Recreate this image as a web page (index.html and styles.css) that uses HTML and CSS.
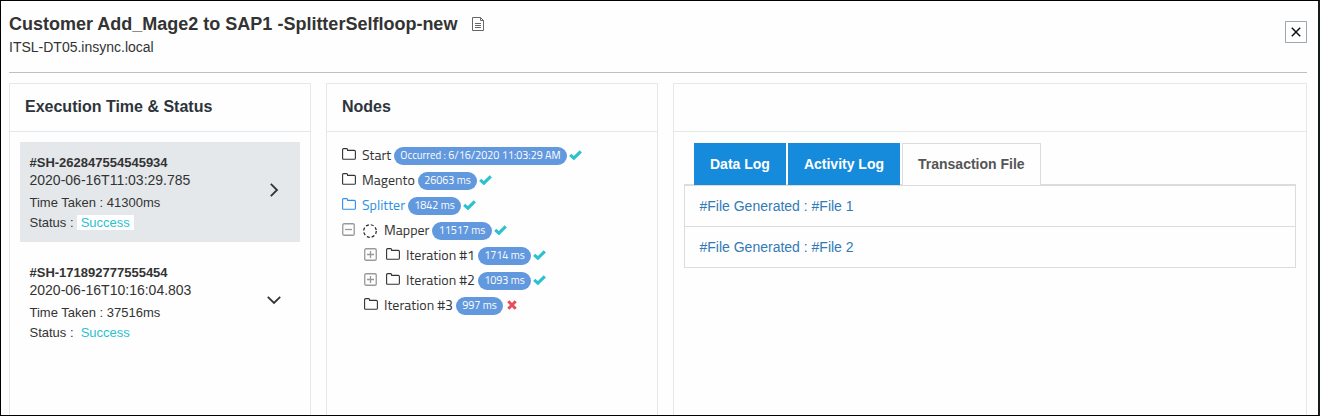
FILE: index.html
```html
<!DOCTYPE html>
<html lang="en">
<head>
<meta charset="utf-8">
<title>Execution details</title>
<link rel="stylesheet" href="styles.css">
</head>
<body>
<svg width="0" height="0" class="defs">
  <symbol id="folder" viewBox="0 0 14 12"><path d="M.6 10.2V1.7Q.6.6 1.7.6H4.6Q5.6.6 5.6 1.7V2.4H12.3Q13.4 2.4 13.4 3.5V10.2Q13.4 11.3 12.3 11.3H1.7Q.6 11.3.6 10.2Z" fill="none" stroke="currentColor" stroke-width="1.1"/></symbol>
  <symbol id="check" viewBox="0 0 13 10"><path d="M1.2 4.8L4.9 8.2 11.8 1.4" fill="none" stroke="#2bc1cf" stroke-width="3.1"/></symbol>
  <symbol id="cross" viewBox="0 0 10 10"><path d="M1.3 1.3L8.7 8.7M8.7 1.3L1.3 8.7" fill="none" stroke="#e94b5b" stroke-width="3"/></symbol>
  <symbol id="plus" viewBox="0 0 13 13"><rect x=".75" y=".75" width="11.5" height="11.5" rx="1.3" fill="none" stroke="#999" stroke-width="1.3"/><path d="M3 6.5H10M6.5 3V10" stroke="#999" stroke-width="1.3"/></symbol>
  <symbol id="minus" viewBox="0 0 13 13"><rect x=".75" y=".75" width="11.5" height="11.5" rx="1.3" fill="none" stroke="#999" stroke-width="1.3"/><path d="M3 6.5H10" stroke="#999" stroke-width="1.3"/></symbol>
</svg>
<main class="dialog">
  <header class="top">
    <div class="heading">
      <h1 class="title">Customer Add_Mage2 to SAP1 -SplitterSelfloop-new
        <svg class="doc" width="12" height="14" viewBox="0 0 12 14"><path d="M.5.5H8.5L11.5 3.5V13.5H.5ZM8.5.5V3.5H11.5M3 6.5H9M3 8.5H9M3 10.5H9" fill="none" stroke="#666"/></svg>
      </h1>
      <div class="host">ITSL-DT05.insync.local</div>
    </div>
    <button class="close" aria-label="Close"><svg width="10" height="10" viewBox="0 0 10 10"><path d="M.8.8L9.2 9.2M9.2.8L.8 9.2" stroke="#111" stroke-width="1.5"/></svg></button>
  </header>
  <div class="columns">
    <section class="panel">
      <h2 class="panel-title">Execution Time &amp; Status</h2>
      <div class="sessions">
        <article class="session selected">
          <div>
            <div class="sid">#SH-262847554545934</div>
            <div class="stamp">2020-06-16T11:03:29.785</div>
            <div class="taken">Time Taken : 41300ms</div>
            <div class="status">Status : <span class="ok">Success</span></div>
          </div>
          <svg class="arrow" width="14" height="14" viewBox="0 0 14 14"><path d="M3.8 .8L10 7 3.8 13.2" fill="none" stroke="#333" stroke-width="1.8"/></svg>
        </article>
        <article class="session">
          <div>
            <div class="sid">#SH-171892777555454</div>
            <div class="stamp">2020-06-16T10:16:04.803</div>
            <div class="taken">Time Taken : 37516ms</div>
            <div class="status">Status : <span class="ok">Success</span></div>
          </div>
          <svg class="arrow" width="14" height="14" viewBox="0 0 14 14"><path d="M.8 3.8L7 10 13.2 3.8" fill="none" stroke="#333" stroke-width="1.8"/></svg>
        </article>
      </div>
    </section>
    <section class="panel">
      <h2 class="panel-title">Nodes</h2>
      <div class="tree">
        <div class="node"><svg class="folder"><use href="#folder"/></svg><span class="name" style="width:32px">Start</span><span class="pill" style="width:173px">Occurred : 6/16/2020 11:03:29 AM</span><svg class="check"><use href="#check"/></svg></div>
        <div class="node"><svg class="folder"><use href="#folder"/></svg><span class="name" style="width:56px">Magento</span><span class="pill" style="width:59px">26063 ms</span><svg class="check"><use href="#check"/></svg></div>
        <div class="node active"><svg class="folder"><use href="#folder"/></svg><span class="name" style="width:46px">Splitter</span><span class="pill" style="width:53px">1842 ms</span><svg class="check"><use href="#check"/></svg></div>
        <div class="node"><svg class="toggle"><use href="#minus"/></svg><svg class="ring" viewBox="0 0 14 14"><circle cx="7" cy="7" r="6.3" fill="none" stroke="#222" stroke-width="1.2" stroke-dasharray="3 1.95"/></svg><span class="name" style="width:48px">Mapper</span><span class="pill" style="width:60px">11517 ms</span><svg class="check"><use href="#check"/></svg></div>
        <div class="node child"><svg class="toggle"><use href="#plus"/></svg><svg class="folder"><use href="#folder"/></svg><span class="name" style="width:72px">Iteration #1</span><span class="pill" style="width:53px">1714 ms</span><svg class="check"><use href="#check"/></svg></div>
        <div class="node child"><svg class="toggle"><use href="#plus"/></svg><svg class="folder"><use href="#folder"/></svg><span class="name" style="width:72px">Iteration #2</span><span class="pill" style="width:53px">1093 ms</span><svg class="check"><use href="#check"/></svg></div>
        <div class="node child"><svg class="folder"><use href="#folder"/></svg><span class="name" style="width:72px">Iteration #3</span><span class="pill" style="width:47px">997 ms</span><svg class="cross"><use href="#cross"/></svg></div>
      </div>
    </section>
    <section class="panel">
      <h2 class="panel-title"></h2>
      <div class="logs">
        <nav class="tabs"><a class="tab">Data Log</a><a class="tab">Activity Log</a><a class="tab current">Transaction File</a></nav>
        <div class="files"><a class="file">#File Generated : #File 1</a><a class="file">#File Generated : #File 2</a></div>
      </div>
    </section>
  </div>
</main>
</body>
</html>
```
FILE: styles.css
```css
* { box-sizing: border-box; }
body { margin: 0; font-family: "Liberation Sans", Arial, sans-serif; color: #333; background: #fefefe; }
.defs { display: block; position: absolute; }
.dialog { width: 1320px; height: 416px; overflow: hidden; border: 1px solid #000; border-right: 2px solid #161b1e; padding: 0 11px 0 8px; display: flex; flex-direction: column; }
.top { height: 72px; flex: none; border-bottom: 1px solid #bfbfbf; display: flex; justify-content: space-between; }
.title { margin: 12px 0 0; font-size: 18px; line-height: 22px; display: flex; align-items: center; gap: 15px; }
.host { font-size: 14px; line-height: 18px; margin-top: 3px; }
.close { width: 22px; height: 22px; margin-top: 20px; padding: 0; border: 1px solid #9ba9b7; background: #fff; display: flex; align-items: center; justify-content: center; }
.columns { flex: 1; min-height: 0; margin-top: 10px; display: grid; grid-template-columns: 302px 332px 634px; gap: 15px; }
.panel { border: 1px solid #e5e8eb; border-bottom: 0; }
.panel-title { margin: 0; height: 48px; padding-left: 15px; border-bottom: 1px solid #e5e8eb; font-size: 16px; line-height: 45px; color: #2e343b; }
.sessions { padding: 10px; display: flex; flex-direction: column; gap: 10px; }
.session { height: 100px; padding: 12px 19px 0 9.5px; display: flex; justify-content: space-between; font-size: 13px; }
.selected { background: #e4e8eb; }
.sid { font-weight: bold; line-height: 17px; }
.stamp { font-size: 14px; line-height: 18px; }
.taken { line-height: 20px; margin-top: 4px; }
.status { line-height: 20px; }
.ok { display: inline-block; color: #2bc1cf; padding: 0 4px; margin-left: -.5px; line-height: 15px; }
.selected .ok { background: #fff; }
.arrow { margin-top: 29px; }
.tree { padding: 12px 0 0 15px; font-family: "Titillium Web", Roboto, sans-serif; }
.node { height: 25px; display: flex; align-items: center; font-size: 14px; }
.child { padding-left: 22px; }
.active { color: #2d8fe3; }
.folder { width: 14px; height: 12px; margin: 0 6px 5px 0; flex: none; }
.toggle { width: 13px; height: 13px; margin: 0 9px 4px 0; flex: none; }
.ring { width: 14px; height: 14px; margin: 0 7px 1px -1px; flex: none; }
.name { white-space: nowrap; flex: none; margin-bottom: 4px; }
.pill { height: 18px; border-radius: 9px; margin-bottom: 1px; background: #6298de; color: #fff; font-size: 10.8px; line-height: 17px; text-align: center; white-space: nowrap; }
.check { width: 13px; height: 10px; margin: 0 0 4px 2px; }
.cross { width: 10px; height: 10px; margin: 0 0 3px 4px; }
.logs { padding: 11px 10px 0; }
.tabs { height: 42px; padding-left: 10px; border-bottom: 1px solid #dcdcdc; display: flex; gap: 2px; font-size: 14px; font-weight: bold; line-height: 42px; }
.tab { height: 42px; padding: 0 16px; background: #168adb; color: #fff; white-space: nowrap; }
.current { padding: 0 15px; background: #fefefe; color: #555; border: 1px solid #dcdcdc; border-bottom: 0; line-height: 40px; }
.files { border: 1px solid #dcdcdc; }
.file { display: block; height: 40px; line-height: 40px; padding-left: 14.5px; font-size: 14px; color: #337ab7; }
.file + .file { height: 41px; border-top: 1px solid #dcdcdc; }
```
